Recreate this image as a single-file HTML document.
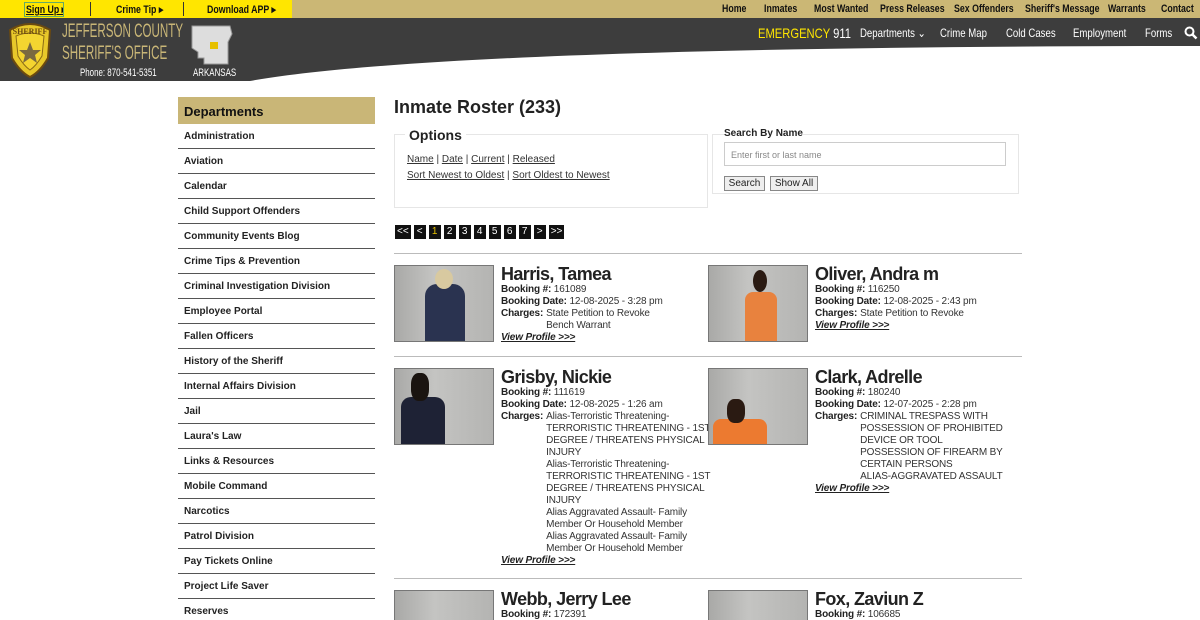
<!DOCTYPE html>
<html><head><meta charset="utf-8"><style>
*{margin:0;padding:0;box-sizing:border-box}
html,body{width:1200px;height:620px;overflow:hidden}
body{background:#fff;font-family:"Liberation Sans",Arial,sans-serif;color:#222}
#w{position:relative;width:1200px;height:620px;overflow:hidden}
.abs{position:absolute}
.sq{display:inline-block;transform:scaleX(.8);transform-origin:left top;white-space:nowrap}
.top a{position:absolute;top:3px;font-size:11px;font-weight:bold;color:#111;text-decoration:none;white-space:nowrap}
.nav a{position:absolute;top:26px;font-size:12px;color:#fff;text-decoration:none;white-space:nowrap}
.side{position:absolute;left:178px;top:97px;width:197px}
.side .h{background:#c9b677;height:27px;font-size:13px;font-weight:bold;padding:7px 6px;color:#111}
.side div.i{height:25px;border-bottom:1px solid #555;font-size:10px;font-weight:bold;padding:7px 6px 0;color:#222}
h1{position:absolute;left:394px;top:97px;font-size:18px;font-weight:bold;color:#222}
.box{position:absolute;border:1px solid #e6e6e6}
.u{text-decoration:underline;color:#333}
.pg{position:absolute;top:225px;left:395px;display:flex;gap:3px}
.pg span{background:#111;color:#fff;font-size:10px;height:14px;line-height:14px;padding:0 2px;min-width:12px;text-align:center}
.hr{position:absolute;left:394px;width:628px;height:1px;background:#bbb}
.ph{position:absolute;width:100px;height:77px;background:linear-gradient(90deg,#a9a9a7,#c4c4c2 40%,#b4b4b2);border:1px solid #777;overflow:hidden}
.inf{position:absolute;font-size:10px;line-height:12px;color:#333;letter-spacing:-.15px}
.inf .nm{font-size:18px;font-weight:bold;line-height:18px;color:#222;margin-bottom:1px;letter-spacing:-.6px}
.inf b{color:#222}
.row{display:flex}.row b{white-space:nowrap;margin-right:3px}
.vp{font-style:italic;font-weight:bold;text-decoration:underline;color:#222}
</style></head><body><div id="w">
<div class="abs" style="left:0;top:0;width:1200px;height:18px;background:#cbb775"></div>
<div class="abs" style="left:0;top:0;width:292px;height:18px;background:#ffe600"></div>
<div class="top">
<a style="left:24px;border:1px solid #6a6;padding:0 1px;top:2px;width:40px;overflow:hidden"><span class="sq" style="text-decoration:underline">Sign Up ▸</span></a>
<div class="abs" style="left:90px;top:2px;width:1px;height:14px;background:#333"></div>
<a style="left:116px"><span class="sq">Crime Tip ▸</span></a>
<div class="abs" style="left:183px;top:2px;width:1px;height:14px;background:#333"></div>
<a style="left:207px"><span class="sq">Download APP ▸</span></a>
<a style="left:722px"><span class="sq">Home</span></a><a style="left:764px"><span class="sq">Inmates</span></a><a style="left:814px"><span class="sq">Most Wanted</span></a><a style="left:880px"><span class="sq">Press Releases</span></a><a style="left:954px"><span class="sq">Sex Offenders</span></a><a style="left:1025px"><span class="sq">Sheriff's Message</span></a><a style="left:1108px"><span class="sq">Warrants</span></a><a style="left:1161px"><span class="sq">Contact</span></a>
</div>
<svg class="abs" style="left:0;top:18px" width="1200" height="64"><path d="M0 0H1200V28C800 28 400 36 250 63H0Z" fill="#3d3d3d"/></svg>
<svg class="abs" style="left:6px;top:22px" width="48" height="56"><path d="M4 8Q24 -4 44 8L42 36Q34 50 24 55Q14 50 6 36Z" fill="#e8c82a" stroke="#6b4a10" stroke-width="2"/><path d="M10 14Q24 8 38 14L36 34Q30 44 24 48Q18 44 12 34Z" fill="#f4d530" stroke="#8a6a15"/><polygon points="24,20 27,28 35,28 29,33 31,41 24,36 17,41 19,33 13,28 21,28" fill="#7a6a40"/><text x="24" y="12" font-size="8" font-weight="bold" text-anchor="middle" fill="#6b4a10" font-family="Liberation Serif">SHERIFF</text></svg>
<div class="abs" style="left:62px;top:21px;font-size:19px;line-height:22px;color:#c9b677;transform:scaleX(.61);transform-origin:left top;white-space:nowrap">JEFFERSON COUNTY<br>SHERIFF'S OFFICE</div>
<div class="abs" style="left:80px;top:67px;font-size:11px;color:#fff"><span class="sq" style="transform:scaleX(.72)">Phone: 870-541-5351</span></div>
<svg class="abs" style="left:190px;top:24px" width="46" height="42"><path d="M2 2H40L42 10L38 18V40H14V34H8V28L2 24Z" fill="#ddd" stroke="#999"/><rect x="20" y="18" width="8" height="7" fill="#e6c000"/></svg>
<div class="abs" style="left:193px;top:67px;font-size:11px;color:#fff"><span class="sq" style="transform:scaleX(.72)">ARKANSAS</span></div>
<div class="nav">
<a style="left:758px;top:25px;font-size:14px;color:#ffe600"><span class="sq">EMERGENCY <span style="color:#fff">911</span></span></a>
<a style="left:860px"><span class="sq">Departments ⌄</span></a><a style="left:940px"><span class="sq">Crime Map</span></a><a style="left:1006px"><span class="sq">Cold Cases</span></a><a style="left:1073px"><span class="sq">Employment</span></a><a style="left:1145px"><span class="sq">Forms</span></a>
</div>
<svg class="abs" style="left:1184px;top:26px" width="14" height="14"><circle cx="5.5" cy="5.5" r="4" stroke="#fff" stroke-width="2" fill="none"/><path d="M8.5 8.5L12.5 12.5" stroke="#fff" stroke-width="2.5"/></svg>

<div class="side"><div class="h">Departments</div>
<div class="i">Administration</div><div class="i">Aviation</div><div class="i">Calendar</div><div class="i">Child Support Offenders</div><div class="i">Community Events Blog</div><div class="i">Crime Tips &amp; Prevention</div><div class="i">Criminal Investigation Division</div><div class="i">Employee Portal</div><div class="i">Fallen Officers</div><div class="i">History of the Sheriff</div><div class="i">Internal Affairs Division</div><div class="i">Jail</div><div class="i">Laura's Law</div><div class="i">Links &amp; Resources</div><div class="i">Mobile Command</div><div class="i">Narcotics</div><div class="i">Patrol Division</div><div class="i">Pay Tickets Online</div><div class="i">Project Life Saver</div><div class="i">Reserves</div></div>

<h1>Inmate Roster (233)</h1>
<div class="box" style="left:394px;top:134px;width:314px;height:74px"></div>
<div class="abs" style="left:405px;top:127px;background:#fff;padding:0 4px;font-size:14px;font-weight:bold">Options</div>
<div class="abs" style="left:407px;top:152px;font-size:10px;line-height:16px;color:#333"><span class="u">Name</span> | <span class="u">Date</span> | <span class="u">Current</span> | <span class="u">Released</span><br><span class="u">Sort Newest to Oldest</span> | <span class="u">Sort Oldest to Newest</span></div>
<div class="box" style="left:712px;top:134px;width:307px;height:60px"></div>
<div class="abs" style="left:724px;top:128px;font-size:10px;font-weight:bold;background:#fff">Search By Name</div>
<div class="abs" style="left:724px;top:142px;width:282px;height:24px;border:1px solid #ccc;font-size:9px;color:#888;padding:7px 6px">Enter first or last name</div>
<div class="abs" style="left:724px;top:176px;width:41px;height:15px;border:1px solid #888;background:#eee;font-size:10px;text-align:center;line-height:13px">Search</div>
<div class="abs" style="left:770px;top:176px;width:48px;height:15px;border:1px solid #888;background:#eee;font-size:10px;text-align:center;line-height:13px">Show All</div>
<div class="pg"><span>&lt;&lt;</span><span>&lt;</span><span style="color:#e6c000">1</span><span>2</span><span>3</span><span>4</span><span>5</span><span>6</span><span>7</span><span>&gt;</span><span>&gt;&gt;</span></div>

<div class="hr" style="top:253px"></div>
<div class="ph" style="left:394px;top:265px"><div style="position:absolute;left:30px;top:18px;width:40px;height:58px;background:#2a3350;border-radius:12px 12px 0 0"></div><div style="position:absolute;left:40px;top:3px;width:18px;height:20px;background:#d8c9a0;border-radius:50%"></div></div>
<div class="inf" style="left:501px;top:265px"><div class="nm">Harris, Tamea</div><b>Booking #:</b> 161089<br><b>Booking Date:</b> 12-08-2025 - 3:28 pm<div class="row"><b>Charges:</b><div>State Petition to Revoke<br>Bench Warrant</div></div><span class="vp">View Profile &gt;&gt;&gt;</span></div>
<div class="ph" style="left:708px;top:265px"><div style="position:absolute;left:36px;top:26px;width:32px;height:50px;background:#e8823e;border-radius:8px 8px 0 0"></div><div style="position:absolute;left:44px;top:4px;width:14px;height:22px;background:#2a1a12;border-radius:50%"></div></div>
<div class="inf" style="left:815px;top:265px"><div class="nm">Oliver, Andra m</div><b>Booking #:</b> 116250<br><b>Booking Date:</b> 12-08-2025 - 2:43 pm<div class="row"><b>Charges:</b><div>State Petition to Revoke</div></div><span class="vp">View Profile &gt;&gt;&gt;</span></div>

<div class="hr" style="top:356px"></div>
<div class="ph" style="left:394px;top:368px"><div style="position:absolute;left:6px;top:28px;width:44px;height:48px;background:#1e2235;border-radius:10px 10px 0 0"></div><div style="position:absolute;left:16px;top:4px;width:18px;height:28px;background:#1a1410;border-radius:40%"></div></div>
<div class="inf" style="left:501px;top:368px"><div class="nm">Grisby, Nickie</div><b>Booking #:</b> 111619<br><b>Booking Date:</b> 12-08-2025 - 1:26 am<div class="row"><b>Charges:</b><div>Alias-Terroristic Threatening-<br>TERRORISTIC THREATENING - 1ST<br>DEGREE / THREATENS PHYSICAL<br>INJURY<br>Alias-Terroristic Threatening-<br>TERRORISTIC THREATENING - 1ST<br>DEGREE / THREATENS PHYSICAL<br>INJURY<br>Alias Aggravated Assault- Family<br>Member Or Household Member<br>Alias Aggravated Assault- Family<br>Member Or Household Member</div></div><span class="vp">View Profile &gt;&gt;&gt;</span></div>
<div class="ph" style="left:708px;top:368px"><div style="position:absolute;left:4px;top:50px;width:54px;height:26px;background:#ec7a30;border-radius:8px 8px 0 0"></div><div style="position:absolute;left:18px;top:30px;width:18px;height:24px;background:#2a1a12;border-radius:40%"></div></div>
<div class="inf" style="left:815px;top:368px"><div class="nm">Clark, Adrelle</div><b>Booking #:</b> 180240<br><b>Booking Date:</b> 12-07-2025 - 2:28 pm<div class="row"><b>Charges:</b><div>CRIMINAL TRESPASS WITH<br>POSSESSION OF PROHIBITED<br>DEVICE OR TOOL<br>POSSESSION OF FIREARM BY<br>CERTAIN PERSONS<br>ALIAS-AGGRAVATED ASSAULT</div></div><span class="vp">View Profile &gt;&gt;&gt;</span></div>

<div class="hr" style="top:578px"></div>
<div class="ph" style="left:394px;top:590px"></div>
<div class="inf" style="left:501px;top:590px"><div class="nm">Webb, Jerry Lee</div><b>Booking #:</b> 172391</div>
<div class="ph" style="left:708px;top:590px"></div>
<div class="inf" style="left:815px;top:590px"><div class="nm">Fox, Zaviun Z</div><b>Booking #:</b> 106685</div>
</div></body></html>
